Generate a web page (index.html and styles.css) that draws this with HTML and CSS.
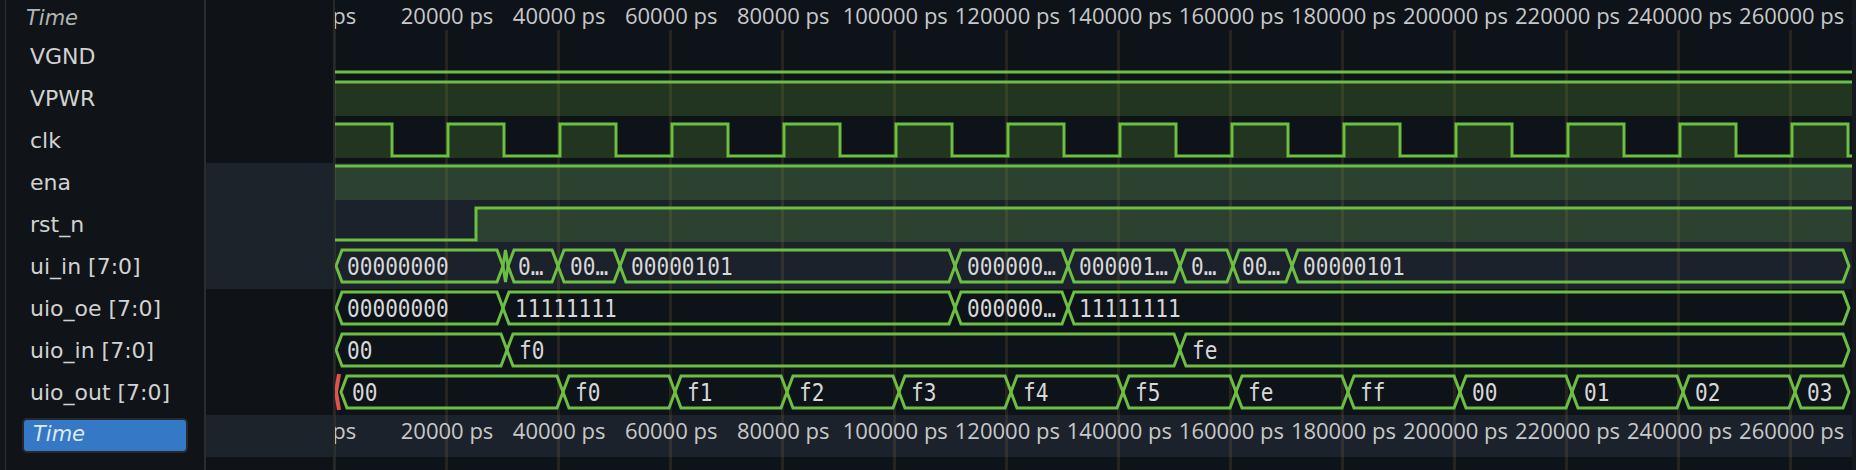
FILE: index.html
```html
<!DOCTYPE html>
<html>
<head>
<meta charset="utf-8">
<link rel="stylesheet" href="styles.css">
</head>
<body>
<div class="app">
  <div class="edge"></div>
  <div class="names">
    <div class="hdr">Time</div>
    <div class="row">VGND</div>
    <div class="row">VPWR</div>
    <div class="row">clk</div>
    <div class="row">ena</div>
    <div class="row">rst_n</div>
    <div class="row">ui_in [7:0]</div>
    <div class="row">uio_oe [7:0]</div>
    <div class="row">uio_in [7:0]</div>
    <div class="row">uio_out [7:0]</div>
    <div class="row tmrow"><div class="sel">Time</div></div>
  </div>
  <div class="vdiv"></div>
  <div class="values">
    <div class="hdr"></div>
    <div class="row"></div>
    <div class="row"></div>
    <div class="row"></div>
    <div class="row hl"></div>
    <div class="row hl"></div>
    <div class="row hl"></div>
    <div class="row"></div>
    <div class="row"></div>
    <div class="row"></div>
    <div class="row hl"></div>
  </div>
  <div class="vdiv2"></div>
  <div class="wave">
    <div class="ticks">
      <span class="tick">0 ps</span><span class="tick">20000 ps</span><span class="tick">40000 ps</span><span class="tick">60000 ps</span><span class="tick">80000 ps</span><span class="tick">100000 ps</span><span class="tick">120000 ps</span><span class="tick">140000 ps</span><span class="tick">160000 ps</span><span class="tick">180000 ps</span><span class="tick">200000 ps</span><span class="tick">220000 ps</span><span class="tick">240000 ps</span><span class="tick">260000 ps</span><span class="tick">280000 ps</span>
    </div>
    <div class="wrow">
      <svg class="sig" width="1517" height="42" viewBox="0 0 1517 42"><path class="ln" d="M0 35H1517"/></svg>
    </div>
    <div class="wrow">
      <svg class="sig" width="1517" height="42" viewBox="0 0 1517 42"><rect class="fl" x="0" y="3" width="1517" height="34"/><path class="ln" d="M0 3H1517"/></svg>
    </div>
    <div class="wrow">
      <svg class="sig" width="1517" height="42" viewBox="0 0 1517 42">
        <rect class="fl" x="0" y="3" width="57" height="34"/><rect class="fl" x="113" y="3" width="56" height="34"/><rect class="fl" x="225" y="3" width="56" height="34"/><rect class="fl" x="337" y="3" width="56" height="34"/><rect class="fl" x="449" y="3" width="56" height="34"/><rect class="fl" x="561" y="3" width="56" height="34"/><rect class="fl" x="673" y="3" width="56" height="34"/><rect class="fl" x="785" y="3" width="56" height="34"/><rect class="fl" x="897" y="3" width="56" height="34"/><rect class="fl" x="1009" y="3" width="56" height="34"/><rect class="fl" x="1121" y="3" width="56" height="34"/><rect class="fl" x="1233" y="3" width="56" height="34"/><rect class="fl" x="1345" y="3" width="56" height="34"/><rect class="fl" x="1457" y="3" width="56" height="34"/>
        <path class="ln" d="M0 3H57V35H113V3H169V35H225V3H281V35H337V3H393V35H449V3H505V35H561V3H617V35H673V3H729V35H785V3H841V35H897V3H953V35H1009V3H1065V35H1121V3H1177V35H1233V3H1289V35H1345V3H1401V35H1457V3H1513V35H1517"/>
      </svg>
    </div>
    <div class="wrow hl">
      <svg class="sig" width="1517" height="42" viewBox="0 0 1517 42"><rect class="fl" x="0" y="3" width="1517" height="34"/><path class="ln" d="M0 3H1517"/></svg>
    </div>
    <div class="wrow hl">
      <svg class="sig" width="1517" height="42" viewBox="0 0 1517 42"><rect class="fl" x="141" y="3" width="1376" height="34"/><path class="ln" d="M0 35H141V3H1517"/></svg>
    </div>
    <div class="wrow hl">
      <svg class="sig" width="1517" height="42" viewBox="0 0 1517 42">
        <polygon class="bus" points="1,19 7,3 162,3 168,19 162,35 7,35"/>
        <polygon class="bus" points="168,19 170.5,3 170.5,3 173,19 170.5,35 170.5,35"/>
        <polygon class="bus" points="173,19 179,3 217,3 223,19 217,35 179,35"/>
        <polygon class="bus" points="223,19 229,3 279,3 285,19 279,35 229,35"/>
        <polygon class="bus" points="285,19 291,3 614,3 620,19 614,35 291,35"/>
        <polygon class="bus" points="620,19 626,3 727,3 733,19 727,35 626,35"/>
        <polygon class="bus" points="733,19 739,3 839,3 845,19 839,35 739,35"/>
        <polygon class="bus" points="845,19 851,3 892,3 898,19 892,35 851,35"/>
        <polygon class="bus" points="898,19 904,3 951,3 957,19 951,35 904,35"/>
        <polygon class="bus" points="957,19 963,3 1508,3 1514,19 1508,35 963,35"/>
        <text class="lbl" transform="translate(12 27.5) scale(.88 1)">00000000</text>
        <text class="lbl" transform="translate(183 27.5) scale(.88 1)">0…</text>
        <text class="lbl" transform="translate(235 27.5) scale(.88 1)">00…</text>
        <text class="lbl" transform="translate(296 27.5) scale(.88 1)">00000101</text>
        <text class="lbl" transform="translate(632 27.5) scale(.88 1)">000000…</text>
        <text class="lbl" transform="translate(744 27.5) scale(.88 1)">000001…</text>
        <text class="lbl" transform="translate(856 27.5) scale(.88 1)">0…</text>
        <text class="lbl" transform="translate(907 27.5) scale(.88 1)">00…</text>
        <text class="lbl" transform="translate(968 27.5) scale(.88 1)">00000101</text>
      </svg>
    </div>
    <div class="wrow">
      <svg class="sig" width="1517" height="42" viewBox="0 0 1517 42">
        <polygon class="bus" points="1,19 7,3 162,3 168,19 162,35 7,35"/>
        <polygon class="bus" points="168,19 174,3 614,3 620,19 614,35 174,35"/>
        <polygon class="bus" points="620,19 626,3 727,3 733,19 727,35 626,35"/>
        <polygon class="bus" points="733,19 739,3 1508,3 1514,19 1508,35 739,35"/>
        <text class="lbl" transform="translate(12 27.5) scale(.88 1)">00000000</text>
        <text class="lbl" transform="translate(180 27.5) scale(.88 1)">11111111</text>
        <text class="lbl" transform="translate(632 27.5) scale(.88 1)">000000…</text>
        <text class="lbl" transform="translate(744 27.5) scale(.88 1)">11111111</text>
      </svg>
    </div>
    <div class="wrow">
      <svg class="sig" width="1517" height="42" viewBox="0 0 1517 42">
        <polygon class="bus" points="1,19 7,3 166,3 172,19 166,35 7,35"/>
        <polygon class="bus" points="172,19 178,3 839,3 845,19 839,35 178,35"/>
        <polygon class="bus" points="845,19 851,3 1508,3 1514,19 1508,35 851,35"/>
        <text class="lbl" transform="translate(12 27.5) scale(.88 1)">00</text>
        <text class="lbl" transform="translate(184 27.5) scale(.88 1)">f0</text>
        <text class="lbl" transform="translate(857 27.5) scale(.88 1)">fe</text>
      </svg>
    </div>
    <div class="wrow">
      <svg class="sig" width="1517" height="42" viewBox="0 0 1517 42">
        <polyline class="xv" points="4,1 1,19 4,37"/>
        <polygon class="bus" points="6,19 12,3 222,3 228,19 222,35 12,35"/>
        <polygon class="bus" points="228,19 234,3 334,3 340,19 334,35 234,35"/>
        <polygon class="bus" points="340,19 346,3 446,3 452,19 446,35 346,35"/>
        <polygon class="bus" points="452,19 458,3 558,3 564,19 558,35 458,35"/>
        <polygon class="bus" points="564,19 570,3 670,3 676,19 670,35 570,35"/>
        <polygon class="bus" points="676,19 682,3 782,3 788,19 782,35 682,35"/>
        <polygon class="bus" points="788,19 794,3 895,3 901,19 895,35 794,35"/>
        <polygon class="bus" points="901,19 907,3 1007,3 1013,19 1007,35 907,35"/>
        <polygon class="bus" points="1013,19 1019,3 1119,3 1125,19 1119,35 1019,35"/>
        <polygon class="bus" points="1125,19 1131,3 1231,3 1237,19 1231,35 1131,35"/>
        <polygon class="bus" points="1237,19 1243,3 1342,3 1348,19 1342,35 1243,35"/>
        <polygon class="bus" points="1348,19 1354,3 1454,3 1460,19 1454,35 1354,35"/>
        <polygon class="bus" points="1460,19 1466,3 1508,3 1514,19 1508,35 1466,35"/>
        <text class="lbl" transform="translate(17 27.5) scale(.88 1)">00</text>
        <text class="lbl" transform="translate(240 27.5) scale(.88 1)">f0</text>
        <text class="lbl" transform="translate(352 27.5) scale(.88 1)">f1</text>
        <text class="lbl" transform="translate(464 27.5) scale(.88 1)">f2</text>
        <text class="lbl" transform="translate(576 27.5) scale(.88 1)">f3</text>
        <text class="lbl" transform="translate(688 27.5) scale(.88 1)">f4</text>
        <text class="lbl" transform="translate(800 27.5) scale(.88 1)">f5</text>
        <text class="lbl" transform="translate(913 27.5) scale(.88 1)">fe</text>
        <text class="lbl" transform="translate(1025 27.5) scale(.88 1)">ff</text>
        <text class="lbl" transform="translate(1137 27.5) scale(.88 1)">00</text>
        <text class="lbl" transform="translate(1249 27.5) scale(.88 1)">01</text>
        <text class="lbl" transform="translate(1360 27.5) scale(.88 1)">02</text>
        <text class="lbl" transform="translate(1472 27.5) scale(.88 1)">03</text>
      </svg>
    </div>
    <div class="wrow hl ticks">
      <span class="tick">0 ps</span><span class="tick">20000 ps</span><span class="tick">40000 ps</span><span class="tick">60000 ps</span><span class="tick">80000 ps</span><span class="tick">100000 ps</span><span class="tick">120000 ps</span><span class="tick">140000 ps</span><span class="tick">160000 ps</span><span class="tick">180000 ps</span><span class="tick">200000 ps</span><span class="tick">220000 ps</span><span class="tick">240000 ps</span><span class="tick">260000 ps</span><span class="tick">280000 ps</span>
    </div>
  </div>
  <div class="redge"></div>
</div>
</body>
</html>
```

FILE: styles.css
```css
html, body {
  margin: 0;
  padding: 0;
}
body {
  background: #0e1217;
  width: 1856px;
  height: 470px;
  overflow: hidden;
  font-family: "Open Sans", "Noto Sans", sans-serif;
}
.app {
  display: flex;
  height: 470px;
}
.edge {
  width: 5px;
  background: #121519;
  border-right: 1px solid #2b2e32;
}
.names {
  width: 198px;
  background: #101418;
  font-family: "DejaVu Sans", sans-serif;
}
.hdr {
  height: 37px;
}
.names .hdr {
  display: flex;
  align-items: center;
  box-sizing: border-box;
  padding-left: 20px;
  padding-bottom: 1px;
  font-style: italic;
  font-size: 21px;
  color: #b4b4b4;
}
.row {
  height: 42px;
}
.names .row {
  display: flex;
  align-items: center;
  box-sizing: border-box;
  padding-left: 24px;
  padding-bottom: 4px;
  font-size: 22px;
  color: #d2d2d2;
  white-space: nowrap;
}
.names .tmrow {
  padding-left: 16px;
  padding-bottom: 0;
  align-items: flex-start;
}
.sel {
  margin-top: 3px;
  width: 166px;
  height: 35px;
  box-sizing: border-box;
  background: #3578c6;
  border: 2px solid #26292d;
  border-radius: 5px;
  padding-left: 9px;
  font-style: italic;
  font-size: 21px;
  line-height: 29px;
  color: #dfe8f2;
}
.vdiv {
  width: 2px;
  background: #2a2d30;
}
.values {
  width: 127px;
  background: #0f1317;
}
.values .hl {
  background: #1d232b;
}
.vdiv2 {
  width: 2px;
  background: #26292c;
}
.wave {
  width: 1517px;
  overflow: hidden;
  background-color: #0e131a;
  background-image: repeating-linear-gradient(90deg, #27241f 0 3px, transparent 3px 112.05px);
  background-position: -2.5px 30px;
  background-size: calc(100% + 3px) calc(100% - 30px);
  background-repeat: no-repeat;
}
.ticks {
  height: 37px;
  display: flex;
  white-space: nowrap;
}
.wrow.ticks {
  height: 42px;
}
.tick {
  flex: 0 0 112.05px;
  text-align: center;
  line-height: 30px;
  font-size: 22px;
  color: #c8c8c8;
}
.tick:first-child {
  margin-left: -56px;
}
.wrow {
  height: 42px;
}
.wrow.hl {
  background: rgba(120, 140, 160, 0.13);
}
.sig {
  display: block;
}
.ln {
  fill: none;
  stroke: #6dbf43;
  stroke-width: 3;
}
.fl {
  fill: rgba(108, 190, 66, 0.2);
}
.bus {
  fill: none;
  stroke: #6dbf43;
  stroke-width: 3;
}
.xv {
  fill: none;
  stroke: #e0524c;
  stroke-width: 4;
}
.lbl {
  font-family: "DejaVu Sans Mono", monospace;
  font-size: 24px;
  fill: #d8d8d8;
}
.redge {
  width: 4px;
  background: #16191d;
}
```
